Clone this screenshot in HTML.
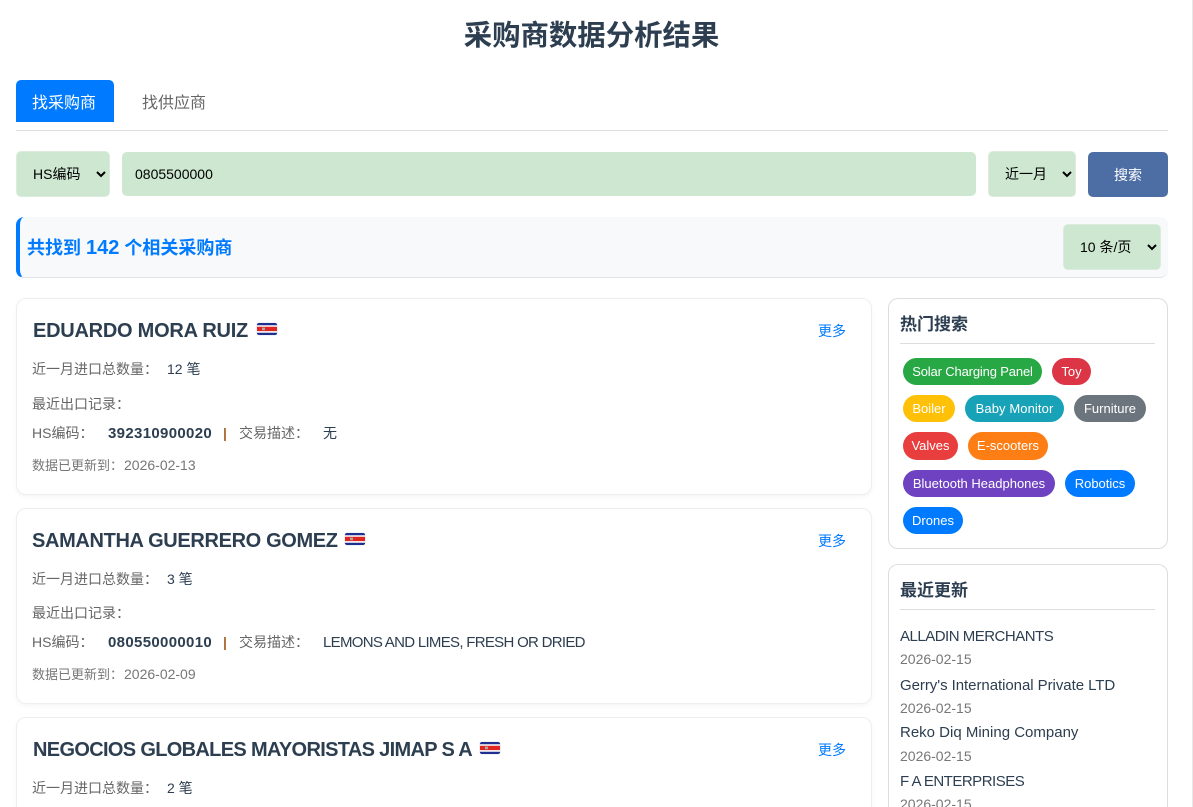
<!DOCTYPE html>
<html lang="zh-CN">
<head>
<meta charset="utf-8">
<title>采购商数据分析结果</title>
<style>
html,body{margin:0;padding:0;width:1193px;height:807px;overflow:hidden;background:#fff;}
body{position:relative;font-family:"Liberation Sans","Noto Sans CJK SC",sans-serif;color:#2c3e50;}
.a{position:absolute;white-space:nowrap;}
.box{position:absolute;box-sizing:border-box;}
.t{position:absolute;white-space:nowrap;line-height:20px;font-size:14px;}
.g{color:#666;}
.d{color:#2c3e50;}
.u{color:#777;font-size:13px;}
.u span{font-size:14px;margin-left:1px;}
.num{font-size:15px;letter-spacing:.33px;font-weight:700;color:#2c3e50;}
.card{position:absolute;box-sizing:border-box;left:16px;width:856px;background:#fff;border:1px solid #eee;border-radius:10px;box-shadow:0 2px 5px rgba(0,0,0,.04);}
.name{position:absolute;white-space:nowrap;font-size:20px;font-weight:700;line-height:28px;color:#2c3e50;left:33px;}
.more{position:absolute;left:818px;font-size:14px;line-height:20px;color:#007bff;white-space:nowrap;}
select,input{position:absolute;box-sizing:border-box;margin:0;background:#cde7d0;border:1px solid #ddd;border-radius:5px;font-family:"Liberation Sans","Noto Sans CJK SC",sans-serif;font-size:14px;color:#000;outline:none;}
select{padding:0 12px;border-color:#dcebdd;}
input{border:1px solid #cde7d0;padding:0 12px;}
.tag{position:absolute;box-sizing:border-box;height:27px;border-radius:14px;color:#fff;font-size:13px;line-height:27px;text-align:center;white-space:nowrap;}
.side{position:absolute;box-sizing:border-box;left:888px;width:280px;background:#fff;border:1px solid #ddd;border-radius:10px;}
.st{position:absolute;left:900px;font-size:17px;font-weight:700;line-height:24px;color:#2c3e50;white-space:nowrap;}
.ln{position:absolute;left:900px;width:255px;height:1px;background:#ddd;}
.rn{position:absolute;left:900px;font-size:15px;line-height:20px;color:#2c3e50;white-space:nowrap;}
.rd{position:absolute;left:900px;font-size:14px;line-height:18px;color:#777;white-space:nowrap;}
svg{position:absolute;}
</style>
</head>
<body>
<div class="a" style="left:0;width:1183px;top:15px;text-align:center;font-size:28.4px;font-weight:700;line-height:42px;color:#2c3e50;">采购商数据分析结果</div>

<div class="box" style="left:16px;top:80px;width:98px;height:42px;background:#007bff;border-radius:5px 5px 0 0;"></div>
<div class="t" style="left:32px;top:93px;font-size:16px;line-height:22px;color:#fff;">找采购商</div>
<div class="t" style="left:142px;top:93px;font-size:16px;line-height:22px;color:#666;">找供应商</div>
<div class="box" style="left:16px;top:130px;width:1152px;height:1px;background:#ddd;"></div>

<select style="left:16px;top:151px;width:94px;height:46px;"><option>HS编码</option></select>
<input style="left:122px;top:152px;width:854px;height:44px;" value="0805500000">
<select style="left:988px;top:151px;width:88px;height:46px;"><option>近一月</option></select>
<div class="box" style="left:1088px;top:152px;width:80px;height:45px;background:#4c6ea4;border-radius:5px;color:#fff;font-size:14px;line-height:46px;text-align:center;">搜索</div>

<div class="box" style="left:16px;top:217px;width:1152px;height:61px;background:#f8f9fa;border-left:4px solid #007bff;border-bottom:1px solid #e3e4e6;border-radius:8px;"></div>
<div class="t" style="left:27px;top:235px;font-size:18px;line-height:26px;font-weight:700;color:#007bff;">共找到 <span style="font-size:20px;">142</span> 个相关采购商</div>
<select style="left:1063px;top:224px;width:98px;height:46px;"><option>10 条/页</option></select>

<!-- card 1 -->
<div class="card" style="top:298px;height:197px;"></div>
<div class="name" style="top:317px;letter-spacing:-.25px;">EDUARDO MORA RUIZ</div>
<svg style="left:256px;top:322px" width="22" height="14" viewBox="0 0 22 14"><rect x=".25" y=".25" width="21.5" height="13.5" rx="3.5" fill="#fff" stroke="#dfe3ea" stroke-width=".5"/><path d="M2.5 1h17a2 2 0 0 1 1.5 1.4v.8H1v-.8A2 2 0 0 1 2.5 1z" fill="#1f2f8f"/><path d="M1 4.7h20v4.4H1z" fill="#e0241f"/><path d="M1 10.8h20v.8a2 2 0 0 1-1.5 1.4h-17a2 2 0 0 1-1.5-1.4z" fill="#1f2f8f"/><rect x="6" y="5.6" width="3" height="2.6" fill="#aaa"/></svg>
<div class="more" style="top:321px;">更多</div>
<div class="t g" style="left:32px;top:359px;">近一月进口总数量：</div>
<div class="t d" style="left:167px;top:359px;">12 笔</div>
<div class="t g" style="left:32px;top:394px;">最近出口记录：</div>
<div class="t g" style="left:32px;top:423px;">HS编码：</div>
<div class="t num" style="left:108px;top:424px;">392310900020</div>
<div class="t" style="left:223px;top:423px;color:#a8692e;font-weight:700;">|</div>
<div class="t g" style="left:239px;top:423px;">交易描述：</div>
<div class="t d" style="left:323px;top:423px;">无</div>
<div class="t u" style="left:32px;top:455px;">数据已更新到：<span>2026-02-13</span></div>

<!-- card 2 -->
<div class="card" style="top:508px;height:196px;"></div>
<div class="name" style="top:527px;letter-spacing:-.35px;left:32px;">SAMANTHA GUERRERO GOMEZ</div>
<svg style="left:344px;top:532px" width="22" height="14" viewBox="0 0 22 14"><rect x=".25" y=".25" width="21.5" height="13.5" rx="3.5" fill="#fff" stroke="#dfe3ea" stroke-width=".5"/><path d="M2.5 1h17a2 2 0 0 1 1.5 1.4v.8H1v-.8A2 2 0 0 1 2.5 1z" fill="#1f2f8f"/><path d="M1 4.7h20v4.4H1z" fill="#e0241f"/><path d="M1 10.8h20v.8a2 2 0 0 1-1.5 1.4h-17a2 2 0 0 1-1.5-1.4z" fill="#1f2f8f"/><rect x="6" y="5.6" width="3" height="2.6" fill="#aaa"/></svg>
<div class="more" style="top:531px;">更多</div>
<div class="t g" style="left:32px;top:569px;">近一月进口总数量：</div>
<div class="t d" style="left:167px;top:569px;">3 笔</div>
<div class="t g" style="left:32px;top:603px;">最近出口记录：</div>
<div class="t g" style="left:32px;top:632px;">HS编码：</div>
<div class="t num" style="left:108px;top:633px;">080550000010</div>
<div class="t" style="left:223px;top:632px;color:#a8692e;font-weight:700;">|</div>
<div class="t g" style="left:239px;top:632px;">交易描述：</div>
<div class="t d" style="left:323px;top:633px;font-size:15px;letter-spacing:-.7px;">LEMONS AND LIMES, FRESH OR DRIED</div>
<div class="t u" style="left:32px;top:664px;">数据已更新到：<span>2026-02-09</span></div>

<!-- card 3 -->
<div class="card" style="top:717px;height:120px;"></div>
<div class="name" style="top:736px;letter-spacing:-.67px;">NEGOCIOS GLOBALES MAYORISTAS JIMAP S A</div>
<svg style="left:479px;top:741px" width="22" height="14" viewBox="0 0 22 14"><rect x=".25" y=".25" width="21.5" height="13.5" rx="3.5" fill="#fff" stroke="#dfe3ea" stroke-width=".5"/><path d="M2.5 1h17a2 2 0 0 1 1.5 1.4v.8H1v-.8A2 2 0 0 1 2.5 1z" fill="#1f2f8f"/><path d="M1 4.7h20v4.4H1z" fill="#e0241f"/><path d="M1 10.8h20v.8a2 2 0 0 1-1.5 1.4h-17a2 2 0 0 1-1.5-1.4z" fill="#1f2f8f"/><rect x="6" y="5.6" width="3" height="2.6" fill="#aaa"/></svg>
<div class="more" style="top:740px;">更多</div>
<div class="t g" style="left:32px;top:778px;">近一月进口总数量：</div>
<div class="t d" style="left:167px;top:778px;">2 笔</div>

<!-- sidebar hot -->
<div class="side" style="top:298px;height:251px;"></div>
<div class="st" style="top:313px;">热门搜索</div>
<div class="ln" style="top:343px;"></div>
<div class="tag" style="left:903px;top:358px;width:139px;background:#28a745;letter-spacing:-.15px;">Solar Charging Panel</div>
<div class="tag" style="left:1052px;top:358px;width:39px;background:#dc3545;">Toy</div>
<div class="tag" style="left:903px;top:395px;width:52px;background:#ffc107;">Boiler</div>
<div class="tag" style="left:965px;top:395px;width:99px;background:#17a2b8;letter-spacing:.1px;">Baby Monitor</div>
<div class="tag" style="left:1074px;top:395px;width:72px;background:#6c757d;">Furniture</div>
<div class="tag" style="left:903px;top:432px;width:55px;height:28px;background:#e83e3e;">Valves</div>
<div class="tag" style="left:968px;top:432px;width:80px;height:28px;background:#fd7e14;">E-scooters</div>
<div class="tag" style="left:903px;top:470px;width:152px;background:#6f42c1;">Bluetooth Headphones</div>
<div class="tag" style="left:1065px;top:470px;width:70px;background:#007bff;">Robotics</div>
<div class="tag" style="left:903px;top:507px;width:60px;background:#007bff;">Drones</div>

<!-- sidebar recent -->
<div class="side" style="top:564px;height:300px;"></div>
<div class="st" style="top:579px;">最近更新</div>
<div class="ln" style="top:609px;"></div>
<div class="rn" style="top:627px;letter-spacing:-.5px;">ALLADIN MERCHANTS</div>
<div class="rd" style="top:650px;">2026-02-15</div>
<div class="rn" style="top:676px;letter-spacing:-.05px;">Gerry's International Private LTD</div>
<div class="rd" style="top:699px;">2026-02-15</div>
<div class="rn" style="top:723px;">Reko Diq Mining Company</div>
<div class="rd" style="top:747px;">2026-02-15</div>
<div class="rn" style="top:772px;letter-spacing:-.5px;">F A ENTERPRISES</div>
<div class="rd" style="top:795px;">2026-02-15</div>

<div class="box" style="left:1192px;top:0;width:1px;height:807px;background:#e8e8e8;"></div>
</body>
</html>
